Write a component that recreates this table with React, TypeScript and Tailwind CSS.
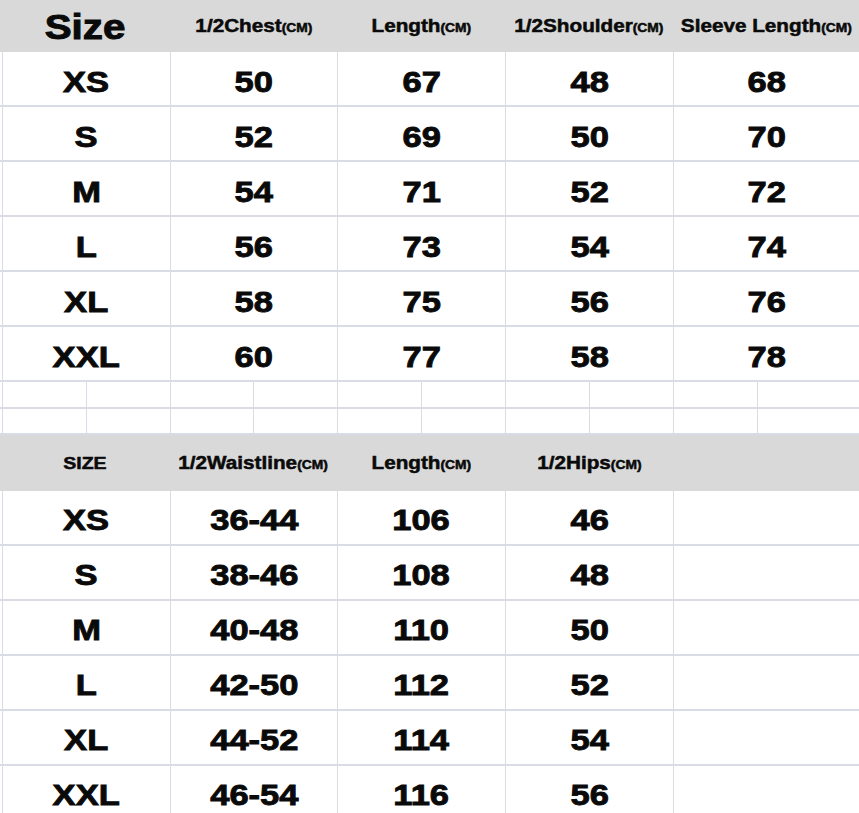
import React from "react";

const LINE = "border-[#d9dce4]";

const Cell = ({ children, pt = "pt-[6px]" }: { children?: React.ReactNode; pt?: string }) => (
  <div className={`flex items-center justify-center border-l ${LINE} ${pt}`}>
    {children !== undefined && (
      <span className="inline-block scale-x-[1.15] font-bold text-[30px] leading-none text-[#0a0a0a] [-webkit-text-stroke:0.9px_#0a0a0a]">
        {children}
      </span>
    )}
  </div>
);

const Head = ({ main, sub, size = "text-[18px]" }: { main?: string; sub?: string; size?: string }) => (
  <div className="flex items-center justify-center">
    {main && (
      <span className={`inline-block scale-x-[1.15] font-bold ${size} leading-none text-[#0a0a0a] [-webkit-text-stroke:0.5px_#0a0a0a]`}>
        {main}
        {sub && <span className="text-[12px]">{sub}</span>}
      </span>
    )}
  </div>
);

const top = [
  ["XS", "50", "67", "48", "68"],
  ["S", "52", "69", "50", "70"],
  ["M", "54", "71", "52", "72"],
  ["L", "56", "73", "54", "74"],
  ["XL", "58", "75", "56", "76"],
  ["XXL", "60", "77", "58", "78"],
];

const bottom = [
  ["XS", "36-44", "106", "46"],
  ["S", "38-46", "108", "48"],
  ["M", "40-48", "110", "50"],
  ["L", "42-50", "112", "52"],
  ["XL", "44-52", "114", "54"],
  ["XXL", "46-54", "116", "56"],
];

const cols = "grid grid-cols-[168px_167px_168px_168px_186px] pl-[2px]";

export default function App() {
  return (
    <div className="w-[859px] h-[813px] overflow-hidden bg-white" style={{ fontFamily: '"Liberation Sans", Arial, sans-serif' }}>
      <div className="grid grid-cols-[170px_167px_168px_168px_186px] h-[52px] bg-[#d9d9d9]">
        <Head main="Size" size="text-[35px] [-webkit-text-stroke:1px_#0a0a0a]" />
        <Head main="1/2Chest" sub="(CM)" />
        <Head main="Length" sub="(CM)" />
        <Head main="1/2Shoulder" sub="(CM)" />
        <Head main="Sleeve Length" sub="(CM)" />
      </div>
      {top.map((r, i) => (
        <div key={i} className={`${cols} h-[55px] border-b-2 ${LINE}`}>
          {r.map((v, j) => (
            <Cell key={j}>{v}</Cell>
          ))}
        </div>
      ))}
      {[27, 26].map((h, i) => (
        <div
          key={i}
          className={`grid grid-cols-[84px_84px_83px_84px_84px_84px_84px_84px_84px_102px] pl-[2px] border-b-2 ${LINE}`}
          style={{ height: h }}
        >
          {Array.from({ length: 10 }).map((_, j) => (
            <div key={j} className={`border-l ${LINE}`} />
          ))}
        </div>
      ))}
      <div className="grid grid-cols-[170px_167px_168px_168px_186px] h-[56px] bg-[#d9d9d9]">
        <Head main="SIZE" size="text-[17px]" />
        <Head main="1/2Waistline" sub="(CM)" />
        <Head main="Length" sub="(CM)" />
        <Head main="1/2Hips" sub="(CM)" />
        <Head />
      </div>
      {bottom.map((r, i) => (
        <div key={i} className={`${cols} h-[55px] border-b-2 ${LINE}`}>
          {r.map((v, j) => (
            <Cell key={j} pt="pt-[5px]">{v}</Cell>
          ))}
          <Cell />
        </div>
      ))}
    </div>
  );
}
